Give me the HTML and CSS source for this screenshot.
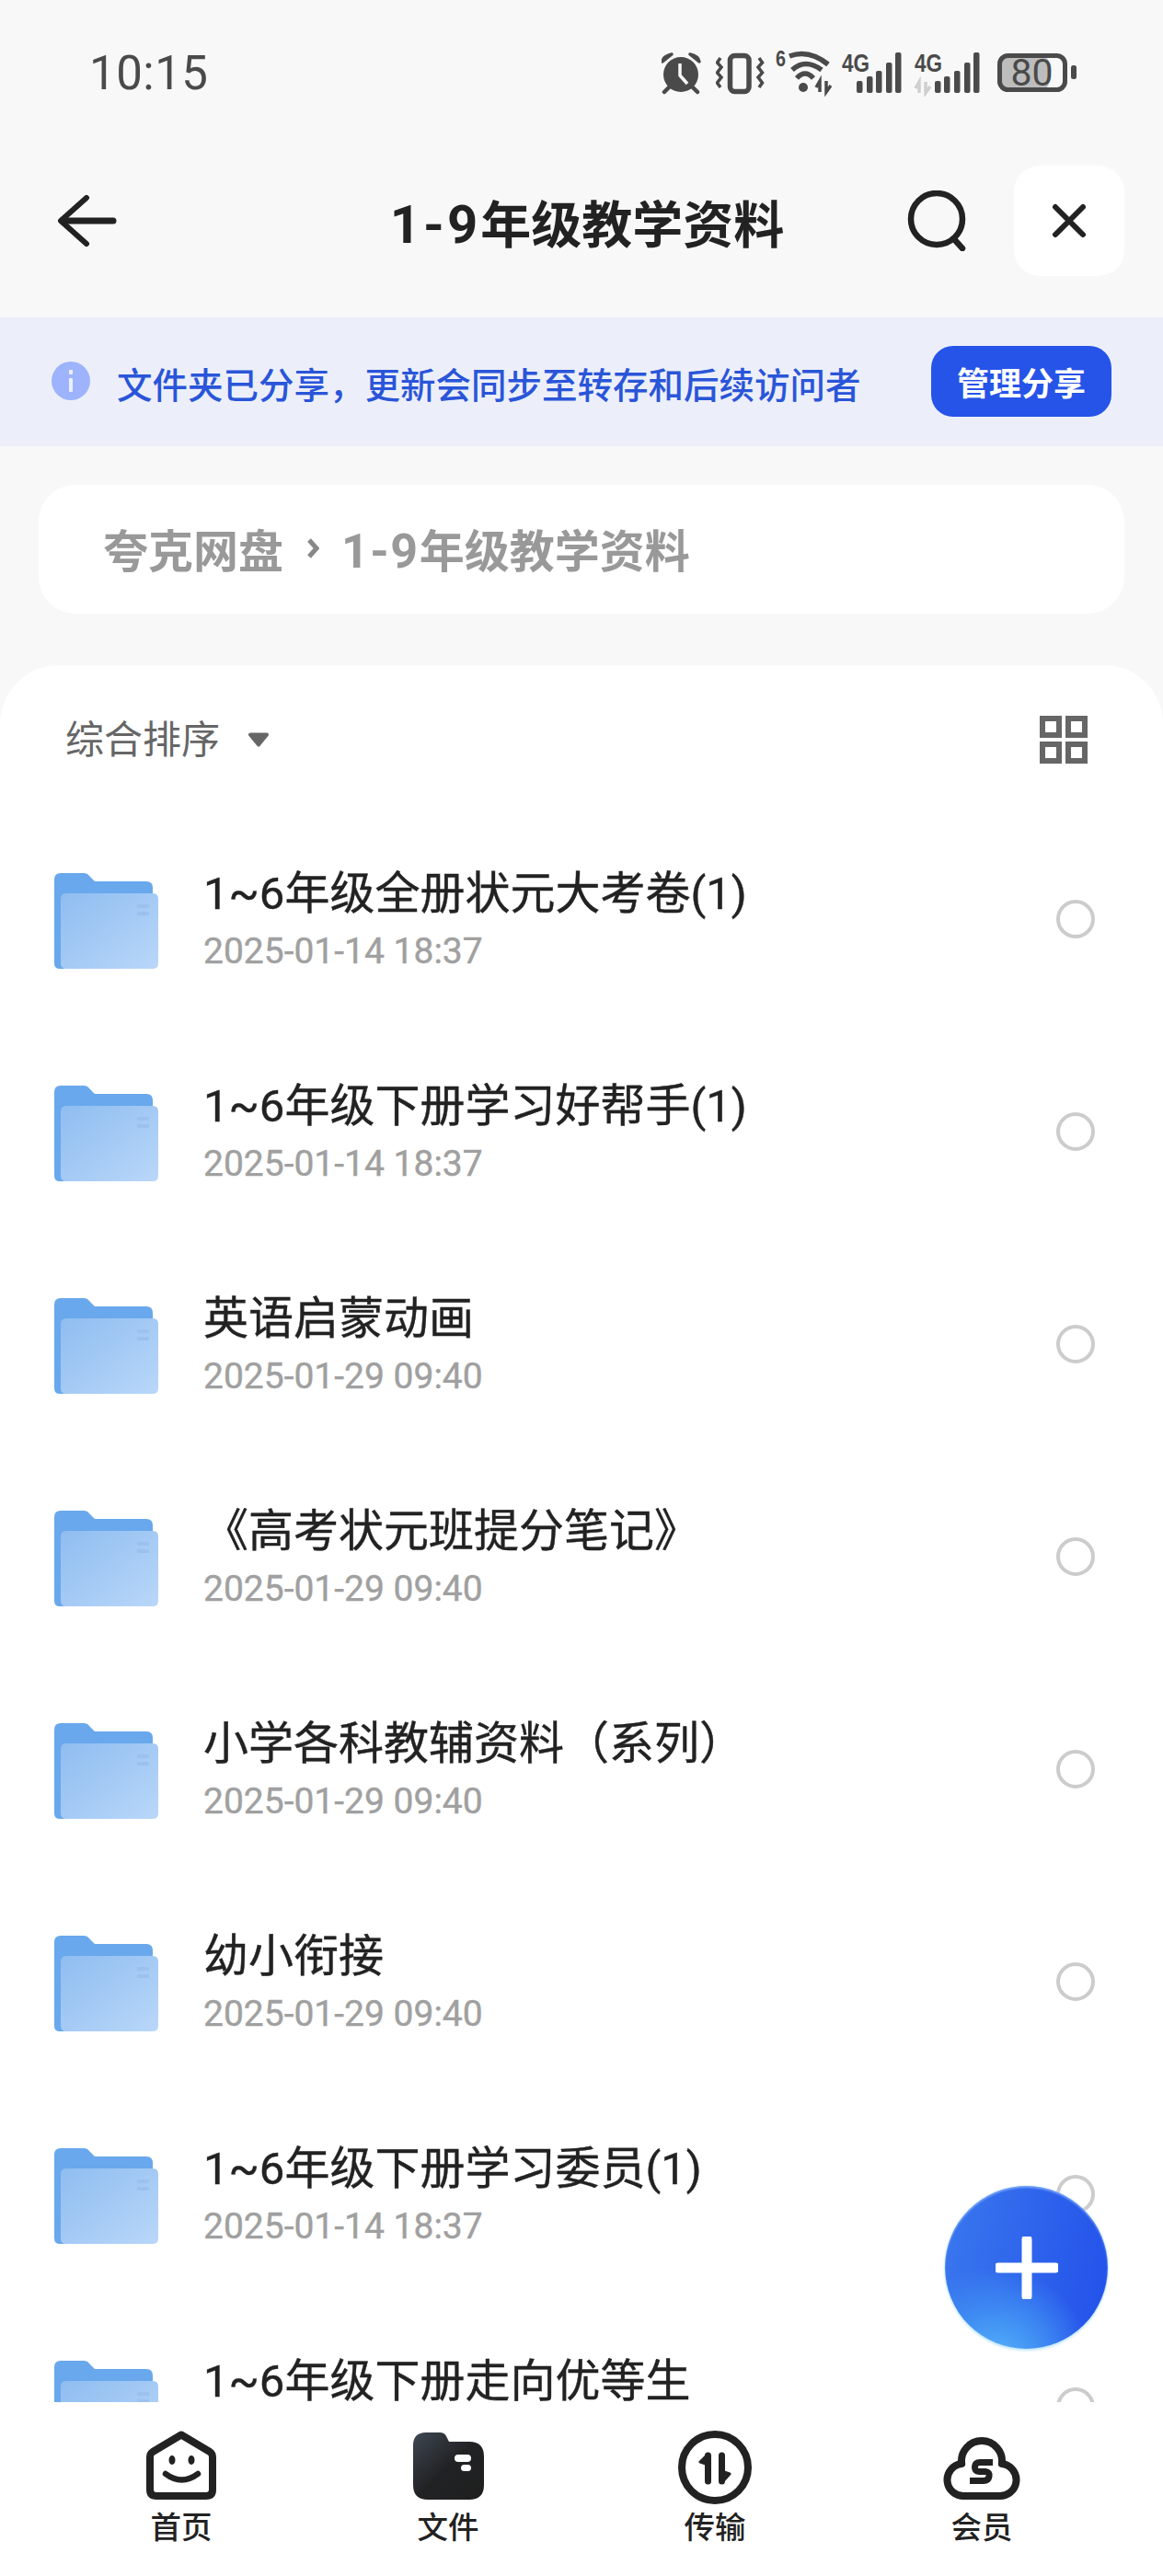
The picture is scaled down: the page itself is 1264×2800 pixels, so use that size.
FILE: index.html
```html
<!DOCTYPE html>
<html lang="zh-CN">
<head>
  <meta charset="UTF-8" />
  <title>1-9年级教学资料</title>
  <link rel="stylesheet" href="styles.css">
</head>
<body>

<svg class="defs" width="0" height="0">
  <defs>
    <linearGradient id="folderFront" x1="0" y1="0" x2="1" y2="1">
      <stop offset="0" stop-color="#8fbdf0"/>
      <stop offset="1" stop-color="#b9d7f9"/>
    </linearGradient>
    <linearGradient id="tabFolder" x1="0" y1="0" x2="1" y2="1">
      <stop offset="0" stop-color="#3f4853"/>
      <stop offset="0.5" stop-color="#212224"/>
      <stop offset="1" stop-color="#1f1f1f"/>
    </linearGradient>
    <symbol id="folder" viewBox="0 0 115 107">
      <path d="M1 9Q1 2 8 2H33Q37 2 39 5L45 11H101Q108 11 108 18V100Q108 106 102 106H7Q1 106 1 100Z" fill="#69a8ec"/>
      <path d="M8 30Q8 24 14 24H108Q114 24 114 30V100Q114 106 108 106H14Q8 106 8 100Z" fill="url(#folderFront)"/>
      <rect x="91" y="36" width="13" height="4" rx="1" fill="#9bc2ee"/>
      <rect x="91" y="44" width="13" height="4" rx="1" fill="#9bc2ee"/>
    </symbol>
  </defs>
</svg>

<div class="app">
  <div class="status">
    <span class="time">10:15</span>
    <div class="status-icons">
      <svg class="st-alarm" viewBox="0 -4 48 54">
        <circle cx="21" cy="26" r="19" fill="#4a4a4a"/>
        <path d="M20 14V27L28 36" fill="none" stroke="#f8f8f8" stroke-width="3.500"/>
        <path d="M1 12Q2 6 11 4L1 12ZM41 12Q40 6 31 4L41 12Z" fill="#4a4a4a" stroke="#4a4a4a" stroke-width="3.500" stroke-linejoin="round"/>
        <path d="M8 40L3 45M34 40L39 45" stroke="#4a4a4a" stroke-width="4.500" stroke-linecap="round"/>
      </svg>
      <svg class="st-vib" viewBox="0 -4 54 54">
        <rect x="15.500" y="5.500" width="20.500" height="39" rx="5" fill="none" stroke="#4a4a4a" stroke-width="5.500"/>
        <path d="M5 8L1.500 13L6 18L1.500 24L6 29L1.500 35L5 40M47 8L50.500 13L46 18L50.500 24L46 29L50.500 35L47 40" fill="none" stroke="#4a4a4a" stroke-width="3.500"/>
      </svg>
      <svg class="st-wifi" viewBox="0 -4 61 54">
        <text class="st-tiny" x="0" y="17" textLength="11" lengthAdjust="spacingAndGlyphs">6</text>
        <path d="M15 6Q36 -2 57 15M18 21Q32 8 50 21M23 30Q32 20 41 30" fill="none" stroke="#4a4a4a" stroke-width="5.500"/>
        <circle cx="30" cy="40" r="5" fill="#4a4a4a"/>
        <path d="M48 45V33L44 40M55 33V45L60 38" fill="none" stroke="#4a4a4a" stroke-width="3.500"/>
      </svg>
      <svg class="st-sig" viewBox="0 -4 67 54">
        <text class="st-4g" x="0" y="23" textLength="30" lengthAdjust="spacingAndGlyphs">4G</text>
        <rect x="16" y="33" width="6.500" height="13" rx="2" fill="#4a4a4a"/>
        <rect x="27" y="28" width="6.500" height="18" rx="2" fill="#4a4a4a"/>
        <rect x="37" y="22" width="6.500" height="24" rx="2" fill="#4a4a4a"/>
        <rect x="48" y="13" width="6.500" height="33" rx="2" fill="#4a4a4a"/>
        <rect x="58" y="2" width="6.500" height="44" rx="2" fill="#4a4a4a"/>
      </svg>
      <svg class="st-sig2" viewBox="0 -4 79 54">
        <text class="st-4g" x="1" y="23" textLength="30" lengthAdjust="spacingAndGlyphs">4G</text>
        <path d="M6 46V34L2 41M13 34V46L18 39" fill="none" stroke="#cfcfcf" stroke-width="3.500"/>
        <rect x="23" y="33" width="6.500" height="13" rx="2" fill="#4a4a4a"/>
        <rect x="33" y="28" width="6.500" height="18" rx="2" fill="#4a4a4a"/>
        <rect x="44" y="22" width="6.500" height="24" rx="2" fill="#4a4a4a"/>
        <rect x="55" y="13" width="6.500" height="33" rx="2" fill="#4a4a4a"/>
        <rect x="65" y="2" width="6.500" height="44" rx="2" fill="#4a4a4a"/>
      </svg>
      <svg class="st-bat" viewBox="0 -4 87 54">
        <rect x="5" y="7" width="52" height="34" rx="6" fill="#bdbdbd"/>
        <rect x="3.500" y="5.500" width="71" height="37" rx="9" fill="none" stroke="#4a4a4a" stroke-width="5"/>
        <rect x="81" y="16" width="6" height="15" rx="2.500" fill="#4a4a4a"/>
        <text class="st-bat-num" x="38.500" y="38" text-anchor="middle">80</text>
      </svg>
    </div>
  </div>

  <div class="nav">
    <svg class="back" viewBox="0 0 64 56">
      <path d="M31 3L3 28L31 53" fill="none" stroke="#222" stroke-width="6" stroke-linecap="round" stroke-linejoin="round"/>
      <path d="M5 28H60" stroke="#222" stroke-width="7" stroke-linecap="round"/>
    </svg>
    <h1 class="title"><span class="num">1-9</span>年级教学资料</h1>
    <div class="nav-right">
      <svg class="search" viewBox="0 0 66 66">
        <circle cx="32" cy="31" r="28" fill="none" stroke="#222" stroke-width="6.500"/>
        <path d="M51 53L60 63" stroke="#222" stroke-width="6.500" stroke-linecap="round"/>
      </svg>
      <div class="close">
        <svg viewBox="0 0 38 38" width="38" height="38">
          <path d="M4 4L34 34M34 4L4 34" stroke="#222" stroke-width="6" stroke-linecap="round"/>
        </svg>
      </div>
    </div>
  </div>

  <div class="banner">
    <svg class="info" viewBox="0 0 42 42">
      <circle cx="21" cy="21" r="21" fill="#9db3fb"/>
      <rect x="19" y="9" width="4" height="5" rx="1" fill="#eceff9"/>
      <rect x="19" y="18" width="4" height="15" rx="1" fill="#eceff9"/>
    </svg>
    <span class="banner-text">文件夹已分享，更新会同步至转存和后续访问者</span>
    <button class="manage">管理分享</button>
  </div>

  <div class="crumb">
    <span>夸克网盘</span>
    <svg class="crumb-sep" viewBox="0 0 14 24">
      <path d="M3 3L11 12L3 21" fill="none" stroke="#888" stroke-width="5"/>
    </svg>
    <span><span class="num-sm">1-9</span>年级教学资料</span>
  </div>

  <div class="sheet">
    <div class="sort">
      <span class="sort-label">综合排序</span>
      <svg class="sort-caret" viewBox="0 0 24 16">
        <path d="M3 2.500H21L12 13.500Z" fill="#666" stroke="#666" stroke-width="4" stroke-linejoin="round"/>
      </svg>
      <svg class="grid-btn" viewBox="0 0 52 52">
        <g fill="none" stroke="#666" stroke-width="6">
          <rect x="3" y="3" width="18" height="18"/>
          <rect x="31" y="3" width="18" height="18"/>
          <rect x="3" y="31" width="18" height="18"/>
          <rect x="31" y="31" width="18" height="18"/>
        </g>
      </svg>
    </div>

    <div class="list">
      <div class="row">
        <svg class="folder"><use href="#folder"/></svg>
        <div class="info-col">
          <div class="name">1~6年级全册状元大考卷(1)</div>
          <div class="date">2025-01-14 18:37</div>
        </div>
        <span class="radio"></span>
      </div>
      <div class="row">
        <svg class="folder"><use href="#folder"/></svg>
        <div class="info-col">
          <div class="name">1~6年级下册学习好帮手(1)</div>
          <div class="date">2025-01-14 18:37</div>
        </div>
        <span class="radio"></span>
      </div>
      <div class="row">
        <svg class="folder"><use href="#folder"/></svg>
        <div class="info-col">
          <div class="name">英语启蒙动画</div>
          <div class="date">2025-01-29 09:40</div>
        </div>
        <span class="radio"></span>
      </div>
      <div class="row">
        <svg class="folder"><use href="#folder"/></svg>
        <div class="info-col">
          <div class="name">《高考状元班提分笔记》</div>
          <div class="date">2025-01-29 09:40</div>
        </div>
        <span class="radio"></span>
      </div>
      <div class="row">
        <svg class="folder"><use href="#folder"/></svg>
        <div class="info-col">
          <div class="name">小学各科教辅资料（系列）</div>
          <div class="date">2025-01-29 09:40</div>
        </div>
        <span class="radio"></span>
      </div>
      <div class="row">
        <svg class="folder"><use href="#folder"/></svg>
        <div class="info-col">
          <div class="name">幼小衔接</div>
          <div class="date">2025-01-29 09:40</div>
        </div>
        <span class="radio"></span>
      </div>
      <div class="row">
        <svg class="folder"><use href="#folder"/></svg>
        <div class="info-col">
          <div class="name">1~6年级下册学习委员(1)</div>
          <div class="date">2025-01-14 18:37</div>
        </div>
        <span class="radio"></span>
      </div>
      <div class="row">
        <svg class="folder"><use href="#folder"/></svg>
        <div class="info-col">
          <div class="name">1~6年级下册走向优等生</div>
        </div>
        <span class="radio"></span>
      </div>
    </div>
  </div>

  <div class="tabs">
    <div class="tab">
      <svg viewBox="0 0 84 82">
        <path d="M42 6.500L73 25Q76 27 76 31V66Q76 73 69 73H15Q8 73 8 66V31Q8 27 11 25Z" fill="none" stroke="#222" stroke-width="8" stroke-linejoin="round"/>
        <ellipse cx="32" cy="34" rx="3.500" ry="5" fill="#222"/>
        <ellipse cx="53" cy="34" rx="3.500" ry="5" fill="#222"/>
        <path d="M25 49Q42.500 62 60 49" fill="none" stroke="#222" stroke-width="6.500" stroke-linecap="round"/>
      </svg>
      <span>首页</span>
    </div>
    <div class="tab">
      <svg viewBox="0 0 84 82">
        <path d="M18 4H33Q38 4 40 8L43 14H65Q81 14 81 30V61Q81 77 65 77H20Q4 77 4 61V18Q4 4 18 4Z" fill="url(#tabFolder)"/>
        <rect x="49" y="28" width="18" height="8" rx="4" fill="#fff"/>
        <rect x="56" y="39" width="11" height="7" rx="3.500" fill="#fff"/>
      </svg>
      <span>文件</span>
    </div>
    <div class="tab">
      <svg viewBox="0 0 84 82">
        <circle cx="42" cy="42" r="36" fill="none" stroke="#222" stroke-width="8"/>
        <path d="M34.500 29V57M49.500 29V57" stroke="#222" stroke-width="7" stroke-linecap="round"/>
        <path d="M34 28L26 36L35 39ZM50 58L58 49L49 46Z" fill="#222" stroke="#222" stroke-width="3" stroke-linejoin="round"/>
      </svg>
      <span>传输</span>
    </div>
    <div class="tab">
      <svg viewBox="0 0 84 82">
        <path d="M24 73A17.600 17.600 0 0 1 20.200 38A22 22 0 1 1 63.800 38A17.600 17.600 0 0 1 60 73Z" fill="none" stroke="#222" stroke-width="8" stroke-linejoin="round"/>
        <path d="M54 36.500H40Q35 36.500 34.500 41Q34 46.500 39 46.500H46Q51 47 50 52Q49 56.500 44 56.500H29" fill="none" stroke="#222" stroke-width="7"/>
      </svg>
      <span>会员</span>
    </div>
  </div>

  <div class="fab">
    <svg viewBox="0 0 68 68" width="68" height="68">
      <path d="M34 3V65M3 34H65" stroke="#fff" stroke-width="11" stroke-linecap="round"/>
    </svg>
  </div>
</div>

</body>
</html>
```

FILE: styles.css
```css
body {
  margin: 0;
  background: #f8f8f8;
  font-family: Roboto, "Noto Sans CJK SC", sans-serif;
}
.defs {
  position: absolute;
}
.app {
  position: relative;
  width: 1264px;
  height: 2800px;
  display: flex;
  flex-direction: column;
  overflow: hidden;
}

/* status bar */
.status {
  height: 156px;
  flex-shrink: 0;
  display: flex;
  align-items: center;
  justify-content: space-between;
  padding: 0 94px 0 97px;
}
.time {
  padding-top: 2px;
  font-size: 51px;
  color: #4a4a4a;
  letter-spacing: 0.5px;
}
.status-icons {
  display: flex;
  align-items: center;
  gap: 11px;
}
.status-icons svg {
  height: 54px;
  display: block;
}
.st-alarm { width: 48px; }
.st-vib { width: 54px; }
.st-wifi { width: 61px; }
.st-sig { width: 67px; }
.st-sig2 { width: 79px; }
.st-bat { width: 87px; }
.st-tiny, .st-4g {
  font-family: "Liberation Sans", sans-serif;
  font-weight: 700;
  fill: #4a4a4a;
}
.st-tiny { font-size: 23px; }
.st-4g { font-size: 27px; }
.st-bat-num {
  font-family: Roboto, sans-serif;
  font-size: 41px;
  fill: #4a4a4a;
}

/* top nav */
.nav {
  height: 120px;
  flex-shrink: 0;
  margin: 24px 42px 45px 63px;
  display: grid;
  grid-template-columns: 1fr auto 1fr;
  align-items: center;
}
.back {
  width: 64px;
  height: 56px;
}
.title {
  margin: 0 9px 0 0;
  font-size: 55px;
  font-weight: 700;
  color: #222;
}
.num {
  font-size: 58px;
  letter-spacing: 3px;
}
.num-sm {
  font-size: 52px;
  letter-spacing: 1.500px;
}
.nav-right {
  display: flex;
  align-items: center;
  justify-content: flex-end;
  gap: 50px;
}
.search {
  width: 66px;
  height: 66px;
}
.close {
  width: 120px;
  height: 120px;
  background: #fff;
  border-radius: 28px;
  display: flex;
  align-items: center;
  justify-content: center;
}

/* share banner */
.banner {
  height: 140px;
  flex-shrink: 0;
  background: #eceff9;
  display: flex;
  align-items: center;
  padding: 0 56px;
}
.info {
  width: 42px;
  height: 42px;
  margin-top: -2px;
}
.banner-text {
  flex: 1;
  margin-left: 29px;
  padding-top: 2px;
  font-size: 38.500px;
  font-weight: 500;
  color: #2a55d9;
}
.manage {
  width: 196px;
  height: 77px;
  margin-top: -1px;
  padding: 0;
  background: #2653e8;
  color: #fff;
  border: none;
  border-radius: 24px;
  font-family: inherit;
  font-size: 35px;
  font-weight: 700;
}

/* breadcrumb */
.crumb {
  height: 140px;
  flex-shrink: 0;
  box-sizing: border-box;
  margin: 42px 42px 56px;
  padding: 0 0 3px 70px;
  background: #fff;
  border-radius: 40px;
  display: flex;
  align-items: center;
  font-size: 49px;
  font-weight: 700;
  color: #999;
}
.crumb-sep {
  width: 14px;
  height: 24px;
  margin: 0 24px 0 25px;
}

/* file list */
.sheet {
  flex: 1;
  min-height: 0;
  background: #fff;
  border-radius: 64px 64px 0 0;
  display: flex;
  flex-direction: column;
}
.sort {
  height: 162px;
  flex-shrink: 0;
  display: flex;
  align-items: center;
  padding: 0 82px 0 71px;
}
.sort-label {
  margin-bottom: 8px;
  font-size: 42px;
  color: #666;
}
.sort-caret {
  width: 24px;
  height: 16px;
  margin-left: 30px;
}
.grid-btn {
  width: 52px;
  height: 52px;
  margin-left: auto;
}
.list {
  flex: 1;
  min-height: 0;
  overflow: hidden;
}
.row {
  height: 231px;
  display: flex;
  align-items: center;
  padding: 0 74px 0 58px;
}
.folder {
  width: 115px;
  height: 107px;
  flex-shrink: 0;
}
.info-col {
  flex: 1;
  align-self: flex-start;
  margin-left: 48px;
  padding-top: 65px;
}
.name {
  font-size: 49px;
  line-height: 44px;
  color: #222;
  -webkit-text-stroke: 0.4px #222;
}
.date {
  margin-top: 12px;
  font-size: 39px;
  line-height: 56px;
  color: #a0a0a0;
  -webkit-text-stroke: 0.4px #a0a0a0;
}
.radio {
  width: 42px;
  height: 42px;
  margin-top: -3px;
  box-sizing: border-box;
  border: 4px solid #ccc;
  border-radius: 50%;
}

/* bottom tabs */
.tabs {
  height: 189px;
  flex-shrink: 0;
  box-sizing: border-box;
  background: #fff;
  padding: 29px 52px 0;
  display: grid;
  grid-template-columns: repeat(4, 1fr);
}
.tab {
  display: flex;
  flex-direction: column;
  align-items: center;
  gap: 4px;
  font-size: 33.500px;
  font-weight: 500;
  line-height: 44px;
  color: #222;
}
.tab svg {
  width: 84px;
  height: 82px;
  display: block;
}

/* add button */
.fab {
  position: absolute;
  left: 1027px;
  top: 2376px;
  width: 177px;
  height: 177px;
  border-radius: 50%;
  background: radial-gradient(circle at 30% 110%, #58b8fb 0, #3f8df3 24%, rgba(47,100,240,0) 46%), linear-gradient(100deg, #3a78ee, #2350ea);
  box-shadow: 0 2px 3px #bfe6fd, 0 0 3px #cfeafd, inset 0 2px 2px rgba(160,200,255,0.6);
  display: flex;
  align-items: center;
  justify-content: center;
}
```
